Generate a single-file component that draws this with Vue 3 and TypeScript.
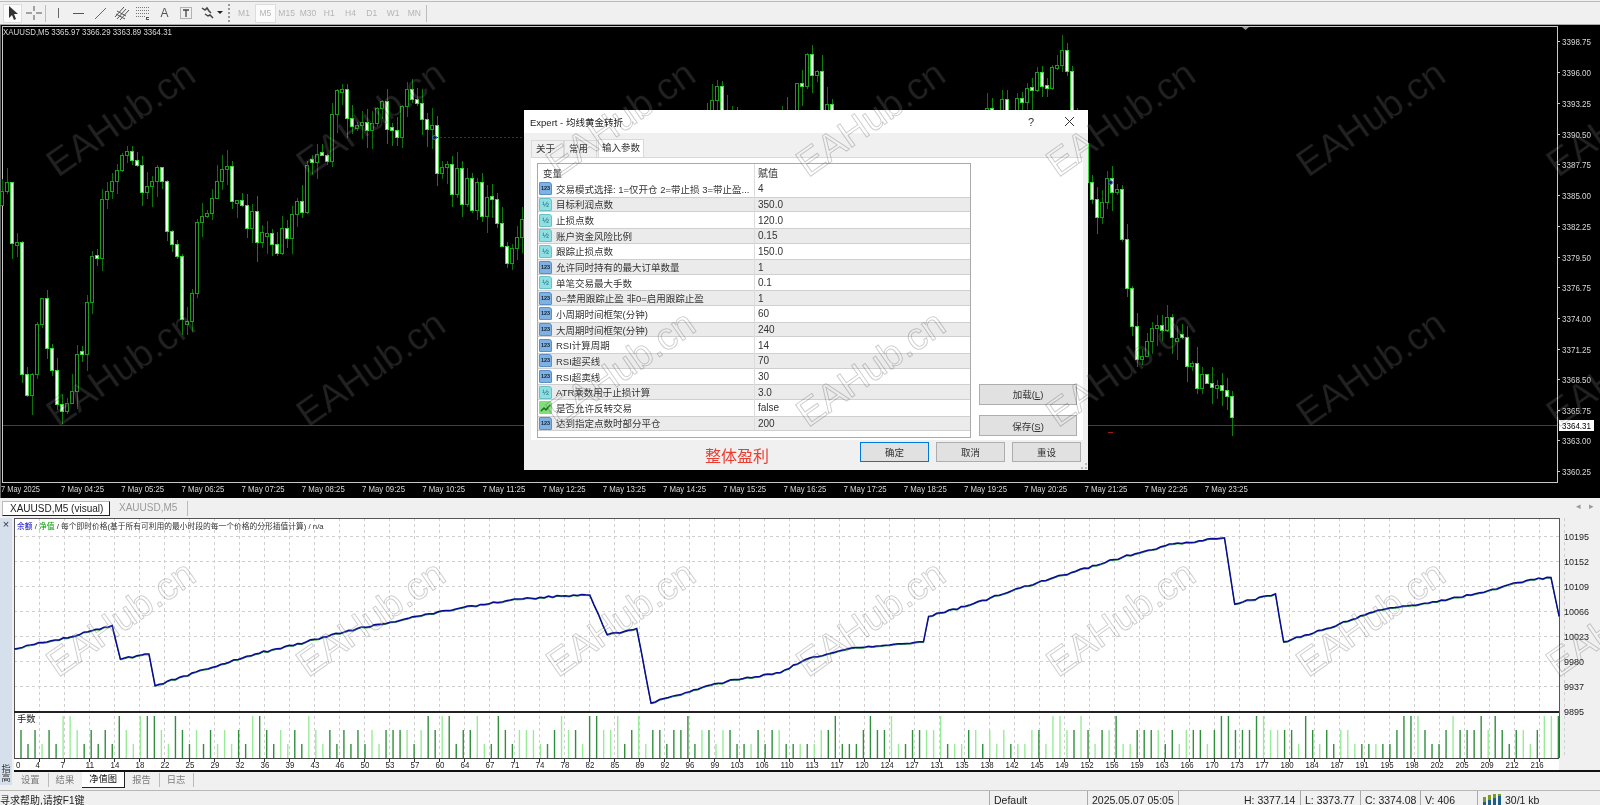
<script setup lang="ts">
function mulberry(a: number) {
  return () => {
    a |= 0; a = (a + 0x6d2b79f5) | 0;
    let t = Math.imul(a ^ (a >>> 15), 1 | a);
    t = (t + Math.imul(t ^ (t >>> 7), 61 | t)) ^ t;
    return ((t ^ (t >>> 14)) >>> 0) / 4294967296;
  };
}
const S = 1600 / 1568;
const keys: number[][] = [[0,200],[5,165],[10,215],[18,260],[23,420],[28,390],[35,330],[40,300],[48,340],[55,390],[62,410],[70,380],[78,350],[88,260],[95,240],[102,170],[108,180],[118,150],[125,170],[132,150],[140,180],[150,175],[160,200],[170,240],[178,300],[185,320],[190,250],[198,210],[208,180],[220,175],[232,190],[245,210],[258,225],[272,240],[285,210],[295,190],[305,160],[320,140],[332,100],[345,110],[358,125],[370,115],[385,125],[400,95],[412,100],[424,140],[432,165],[445,180],[460,185],[480,200],[495,240],[505,225],[520,240],[620,230],[690,110],[710,100],[740,170],[780,100],[795,55],[805,100],[825,180],[900,190],[1040,55],[1050,100],[1060,150],[1072,210],[1085,180],[1095,190],[1105,300],[1115,355],[1130,320],[1145,320],[1160,340],[1170,370],[1185,365],[1195,380],[1208,405]];
function interp(x: number): number {
  const sx = x / S;
  for (let i = 1; i < keys.length; i++) {
    if (sx <= keys[i][0]) {
      const [a, b] = keys[i - 1];
      const [c, d] = keys[i];
      return (b + ((d - b) * (sx - a)) / (c - a)) * S;
    }
  }
  return keys[keys.length - 1][1] * S;
}
const r1 = mulberry(77);
const extra: Record<number, number> = { 61: 470, 186: 360, 1131: 430, 1156: 394 };
const candles: { x: number; top: number; h: number; w1: number; w2: number; up: boolean }[] = [];
let prev = interp(0);
for (let i = 0; i < 247; i++) {
  const x = 1.5 + 5 * i;
  const c = interp(x) + (r1() - 0.5) * (x > 1100 ? 22 : 42);
  let o = prev;
  if (Math.abs(c - o) < 3) o = c + (r1() > 0.5 ? 3 : -3);
  const top = Math.min(o, c);
  const bot = Math.max(o, c);
  let w2 = bot + r1() * 20;
  if (extra[x] !== undefined) w2 = extra[x];
  candles.push({ x, top, h: bot - top, w1: top - r1() * 18, w2, up: c < o });
  prev = c;
}
const priceLabels: [string, number][] = [['3398.75',40],['3396.00',71],['3393.25',102],['3390.50',133],['3387.75',163],['3385.00',194],['3382.25',225],['3379.50',256],['3376.75',286],['3374.00',317],['3371.25',348],['3368.50',378],['3365.75',409],['3363.00',439],['3360.25',470]];
const timeLabels: string[] = Array.from({ length: 20 }, (_, i) => `7 May ${String(i + 4).padStart(2, '0')}:25`);

const eq: number[][] = [[14,635],[30,631],[50,627],[70,623],[90,617],[110,612],[118,645],[146,640],[152,671],[200,655],[250,640],[300,628],[350,615],[400,605],[450,595],[500,587],[550,583],[578,582],[595,621],[624,615],[638,688],[680,675],[720,665],[765,658],[790,645],[830,635],[905,628],[910,603],[950,592],[1000,575],[1050,560],[1100,545],[1150,532],[1200,526],[1210,591],[1250,581],[1258,628],[1300,615],[1350,597],[1400,590],[1450,580],[1500,567],[1520,565],[1528,603]];
const r2 = mulberry(5);
const eqPts: string[] = [];
for (let i = 0; i < eq.length; i++) {
  const [a, b] = eq[i];
  if (i > 0) {
    const [pa, pb] = eq[i - 1];
    const n = Math.floor((a - pa) / 4);
    for (let k = 1; k < n; k++) {
      const t = k / n;
      eqPts.push(`${(pa + (a - pa) * t) * S},${(pb + (b - pb) * t) * S - 517 + (r2() - 0.5) * 1.8}`);
    }
  }
  eqPts.push(`${a * S},${b * S - 517}`);
}
const eqLine = eqPts.join(' ');

const eqLabels: [string, number][] = [['10195',18],['10152',43],['10109',68],['10066',93],['10023',118],['9980',143],['9937',168],['9895',193]];
const gridX = Array.from({ length: 62 }, (_, i) => 39 + 25 * i);
const gridY = [18, 43, 68, 93, 118, 143, 168];
const xLabels = '0 4 7 11 14 18 22 25 29 32 36 39 43 46 50 53 57 60 64 67 71 74 78 82 85 89 92 96 99 103 106 110 113 117 120 124 127 131 135 138 142 145 149 152 156 159 163 166 170 173 177 180 184 187 191 195 198 202 205 209 212 216'.split(' ');

const volSeq = '2d 1d 2d 1l 2d 1d 3l 3l 2l 1d 2d 1d 2d 1d 3d 2l 1l 3l 3d 3d 2l 1l 3d 2d 1d 2l 1d 2d 1l 2l 1l 2d 1d 3l 3d 2d 1d 2l 1l 2d 1d 3l 2l 1l 2d 1d 2d 1d 2d 1d 2l 1l 2d'.split(' ');
const r3 = mulberry(21);
const vols = Array.from({ length: 220 }, (_, i) => {
  let code = volSeq[i];
  if (!code) {
    const lv = r3();
    code = (lv < 0.22 ? '3' : lv < 0.62 ? '2' : '1') + (r3() < 0.6 ? 'd' : 'l');
  }
  const h = code[0] === '3' ? 42 : code[0] === '2' ? 28 : 14;
  return { x: 21 + 7.02 * i, h, c: code[1] === 'd' ? '#2f8f3a' : '#98ec98' };
});

type Kind = 'n' | 'd' | 'b';
const rows: { name: string; value: string; kind: Kind }[] = [
  { name: '交易模式选择: 1=仅开仓 2=带止损 3=带止盈...', value: '4', kind: 'n' },
  { name: '目标利润点数', value: '350.0', kind: 'd' },
  { name: '止损点数', value: '120.0', kind: 'd' },
  { name: '账户资金风险比例', value: '0.15', kind: 'd' },
  { name: '跟踪止损点数', value: '150.0', kind: 'd' },
  { name: '允许同时持有的最大订单数量', value: '1', kind: 'n' },
  { name: '单笔交易最大手数', value: '0.1', kind: 'd' },
  { name: '0=禁用跟踪止盈 非0=启用跟踪止盈', value: '1', kind: 'n' },
  { name: '小周期时间框架(分钟)', value: '60', kind: 'n' },
  { name: '大周期时间框架(分钟)', value: '240', kind: 'n' },
  { name: 'RSI计算周期', value: '14', kind: 'n' },
  { name: 'RSI超买线', value: '70', kind: 'n' },
  { name: 'RSI超卖线', value: '30', kind: 'n' },
  { name: 'ATR乘数用于止损计算', value: '3.0', kind: 'd' },
  { name: '是否允许反转交易', value: 'false', kind: 'b' },
  { name: '达到指定点数时部分平仓', value: '200', kind: 'n' },
];
const timeframes = ['M1', 'M5', 'M15', 'M30', 'H1', 'H4', 'D1', 'W1', 'MN'];
const marks: number[][] = [];
for (let r = 0; r < 3; r++) for (let c = 0; c < 7; c++) marks.push([58 + 250 * c, 178 + 250 * r]);
</script>

<template>
  <div class="app">
    <header class="toolbar">
      <div class="tool sel">
        <svg width="14" height="16" viewBox="0 0 14 16"><path d="M3 1v12l3-3 2 5 2-1-2-5h4z" fill="#333"/></svg>
      </div>
      <div class="tool">
        <svg width="16" height="16" viewBox="0 0 16 16"><path d="M0 8h6M10 8h6M8 1v5M8 10v5" stroke="#555" fill="none"/></svg>
      </div>
      <i class="sep"></i>
      <div class="tool"><svg width="16" height="16" viewBox="0 0 16 16"><path d="M8.500 3v10" stroke="#666" fill="none"/></svg></div>
      <div class="tool"><svg width="16" height="16" viewBox="0 0 16 16"><path d="M2 8.500h11" stroke="#555" fill="none"/></svg></div>
      <div class="tool"><svg width="16" height="16" viewBox="0 0 16 16"><path d="M2 14 13 3" stroke="#666" fill="none"/></svg></div>
      <div class="tool"><svg width="16" height="16" viewBox="0 0 16 16"><path d="M1 12 10 2M3 14 12 4M6 15l9-10M3 6l9 5M2 9l9 5" stroke="#555" fill="none"/></svg></div>
      <div class="tool"><svg width="16" height="16" viewBox="0 0 16 16"><path d="M1 2.500h13M1 5.500h13M1 8.500h13M1 11.500h9" stroke="#777" stroke-dasharray="1 1" fill="none"/><path d="M11 12h3v1h-2v1h2v1h-3z" fill="#555"/></svg></div>
      <div class="tool letter">A</div>
      <div class="tool"><svg width="16" height="16" viewBox="0 0 16 16"><rect x="2.500" y="2.500" width="11" height="11" fill="none" stroke="#777" stroke-dasharray="1 1"/><path d="M5 5h6M8 5v7" stroke="#444" stroke-width="1.300" fill="none"/></svg></div>
      <div class="tool wide">
        <svg width="24" height="16" viewBox="0 0 24 16"><path d="M2 3l3 2 2-2 2 3 2 2M5 9l3 2 2-1 3 3" stroke="#444" stroke-width="1.500" fill="none"/><path d="M17 6h6l-3 3z" fill="#222"/></svg>
      </div>
      <i class="grip"></i>
      <div class="tf-group">
        <span v-for="t in timeframes" :key="t" class="tf" :class="{ active: t === 'M5' }">{{ t }}</span>
      </div>
      <i class="sep end"></i>
    </header>

    <section class="chart">
      <svg class="plot" width="1600" height="473" viewBox="0 24 1600 473">
        <g shape-rendering="crispEdges">
          <path d="M0.500 24V497" stroke="#666" fill="none"/>
          <rect x="2" y="25" width="1555.500" height="456" fill="none" stroke="#c8c8c8"/>
          <path d="M3 424.500H1557" stroke="#39444f" fill="none"/>
          <g v-for="c in candles" :key="c.x">
            <line :x1="c.x + 0.5" :x2="c.x + 0.5" :y1="c.w1" :y2="c.w2" :stroke="c.up ? '#0d6f0d' : '#0f7f0f'"/>
            <rect :x="c.x - 1" :y="c.top" width="3" :height="c.h" :fill="c.up ? '#000' : '#f2fff2'" :stroke="c.up ? '#1c9a1c' : '#3bdc3b'"/>
          </g>
          <path d="M436 136.500H524" stroke="#1c2f9e" stroke-dasharray="2 2" fill="none"/>
          <path d="M1108 431.500h5" stroke="#9e1c1c" fill="none"/>
        </g>
        <circle cx="434.500" cy="136.500" r="2" fill="#1a1a1a" stroke="#4a6ae8"/>
        <circle cx="1110.500" cy="181.500" r="2" fill="#1a1a1a" stroke="#4a6ae8"/>
        <path d="M1242 26h7l-3.500 3z" fill="#999"/>
        <text x="3" y="34" class="t light" textLength="169" lengthAdjust="spacingAndGlyphs">XAUUSD,M5  3365.97 3366.29 3363.89 3364.31</text>
        <g v-for="p in priceLabels" :key="p[0]">
          <path :d="`M1557 ${p[1] + 0.5}h3`" stroke="#ccc" fill="none"/>
          <text x="1562" :y="p[1] + 3.500" class="t light" textLength="29" lengthAdjust="spacingAndGlyphs">{{ p[0] }}</text>
        </g>
        <rect x="1559" y="419" width="35" height="11" fill="#fff"/>
        <text x="1562" y="428" class="t" fill="#000" textLength="29" lengthAdjust="spacingAndGlyphs">3364.31</text>
        <text x="1" y="491" class="t light" textLength="39" lengthAdjust="spacingAndGlyphs">7 May 2025</text>
        <g v-for="(t, i) in timeLabels" :key="t">
          <text :x="61 + i * 60.2" y="491" class="t light" textLength="43" lengthAdjust="spacingAndGlyphs">{{ t }}</text>
        </g>
      </svg>
    </section>

    <nav class="win-tabs">
      <span class="win-tab active">XAUUSD,M5 (visual)</span>
      <span class="win-tab">XAUUSD,M5</span>
      <span class="arrows">◂&nbsp;&nbsp;&nbsp;▸</span>
    </nav>

    <section class="tester">
      <aside class="side">
        <span class="close">×</span>
        <span class="side-label">指<br>高</span>
      </aside>
      <div class="tester-main">
        <svg class="plot" width="1588" height="254" viewBox="12 517 1588 254">
          <svg x="0" y="517" width="1600" height="254" viewBox="0 0 1600 254">
            <rect x="14" y="0.500" width="1545" height="253" fill="#fff"/>
            <g shape-rendering="crispEdges" fill="none">
              <path v-for="x in gridX" :key="x" :d="`M${x + 0.5} 0V240`" stroke="#cfcfcf" stroke-dasharray="3 3"/>
              <path v-for="y in gridY" :key="y" :d="`M14 ${y + 0.5}H1559`" stroke="#cfcfcf" stroke-dasharray="3 3"/>
              <path d="M14.500 0V240M14 .5H1559M1559.500 0V240" stroke="#555"/>
              <path d="M14 194H1559" stroke="#222" stroke-width="2"/>
              <path d="M14 240.500H1559" stroke="#444"/>
              <path d="M14 253H1600" stroke="#111" stroke-width="2" />
            </g>
            <path v-for="v in vols" :key="v.x" :d="`M${v.x} 240V${240 - v.h}`" :stroke="v.c" stroke-width="1.400" fill="none"/>
            <polyline :points="eqLine" fill="none" stroke="#2aa02a" stroke-width="1" transform="translate(0 .8)"/>
            <polyline :points="eqLine" fill="none" stroke="#0a0a96" stroke-width="1.500"/>
            <text x="17" y="11" class="t legend"><tspan fill="#0000c8">余额</tspan><tspan fill="#333"> / </tspan><tspan fill="#00a000">净值</tspan><tspan fill="#333"> / 每个即时价格(基于所有可利用的最小时段的每一个价格的分形插值计算) / n/a</tspan></text>
            <text x="17" y="204" class="t cjk" fill="#222">手数</text>
            <g v-for="p in eqLabels" :key="p[0]">
              <text x="1564" :y="p[1] + 3.500" class="t" fill="#222" :textLength="p[0].length * 5" lengthAdjust="spacingAndGlyphs">{{ p[0] }}</text>
            </g>
            <g v-for="(l, i) in xLabels" :key="i">
              <path v-if="i > 0" :d="`M${39.5 + 25 * (i - 1)} 240v4`" stroke="#333" fill="none"/>
              <text :x="i === 0 ? 16 : 10.5 + 25 * i - (l.length > 2 ? 5 : 0)" y="250" class="t" fill="#222" :textLength="l.length * 4.400" lengthAdjust="spacingAndGlyphs">{{ l }}</text>
            </g>
          </svg>
        </svg>
        <nav class="tabs-bottom">
          <span class="b-tab">设置</span>
          <span class="b-tab">结果</span>
          <span class="b-tab active">净值图</span>
          <span class="b-tab">报告</span>
          <span class="b-tab">日志</span>
        </nav>
      </div>
    </section>

    <footer class="status">
      <span class="cell help">寻求帮助,请按F1键</span>
      <span class="cell c1">Default</span>
      <span class="cell c2">2025.05.07 05:05</span>
      <span class="cell c4">H: 3377.14</span>
      <span class="cell c5">L: 3373.77</span>
      <span class="cell c6">C: 3374.08</span>
      <span class="cell c7">V: 406</span>
      <span class="cell c8">
        <svg width="20" height="13" viewBox="0 0 20 13"><path d="M1 4h3v9H1zM6 2h3v11H6zM11 1h3v12h-3zM16 1h3v12h-3z" fill="#7d9b1e"/><path d="M1 9h3v4H1zM6 7h3v6H6zM11 5h3v8h-3zM16 3h3v10h-3z" fill="#1d5f86"/></svg>
        30/1 kb
      </span>
    </footer>

    <div class="dialog">
      <div class="title">
        <span class="title-text">Expert - 均线黄金转折</span>
        <span class="q">?</span>
        <svg class="x" width="11" height="11" viewBox="0 0 11 11"><path d="M1 1l9 9M10 1l-9 9" stroke="#333" fill="none"/></svg>
      </div>
      <div class="d-tabs">
        <span class="d-tab">关于</span>
        <span class="d-tab">常用</span>
        <span class="d-tab active">输入参数</span>
      </div>
      <div class="page">
        <div class="table">
          <div class="row head"><span class="name h">变量</span><span class="val">赋值</span></div>
          <div v-for="(r, i) in rows" :key="i" class="row" :class="{ alt: i % 2 === 1 }">
            <span class="name">
              <span class="ic" :class="r.kind">
                <template v-if="r.kind === 'n'">123</template>
                <template v-else-if="r.kind === 'd'">½</template>
                <svg v-else width="13" height="13" viewBox="0 0 13 13"><path d="M2 10l3-3 2 2 4-5" stroke="#1c6b1c" stroke-width="1.500" fill="none"/></svg>
              </span>
              {{ r.name }}
            </span>
            <span class="val">{{ r.value }}</span>
          </div>
        </div>
        <div class="side-btns">
          <button class="btn side-btn" type="button">加载(<u>L</u>)</button>
          <button class="btn side-btn" type="button">保存(<u>S</u>)</button>
        </div>
      </div>
      <div class="foot">
        <span class="profit">整体盈利</span>
        <button class="btn main primary" type="button">确定</button>
        <button class="btn main" type="button">取消</button>
        <button class="btn main" type="button">重设</button>
      </div>
      <svg class="d-grip" width="6" height="6" viewBox="0 0 6 6"><path d="M4 0h2v2H4zM0 4h2v2H0zM4 4h2v2H4z" fill="#bbb"/></svg>
    </div>

    <svg class="marks" width="1600" height="805" viewBox="0 0 1600 805">
      <text v-for="m in marks" :key="m[0] + '-' + m[1]" :x="m[0]" :y="m[1]" :transform="`rotate(-35 ${m[0]} ${m[1]})`" class="mark">EAHub.cn</text>
    </svg>
  </div>
</template>

<style>
html, body { margin: 0; background: #f0f0f0; overflow: hidden; }
</style>

<style scoped>
.app {
  position: relative;
  width: 1600px;
  height: 805px;
  overflow: hidden;
  display: flex;
  flex-direction: column;
  background: #f0f0f0;
  font-family: "Liberation Sans", "Noto Sans CJK SC", sans-serif;
  font-size: 10px;
  color: #222;
  filter: blur(0.35px);
}
.toolbar {
  margin-top: 1px;
  border-top: 1px solid #bbb;
  border-bottom: 1px solid #a8a8a8;
  box-sizing: border-box;
  display: flex;
  align-items: center;
  padding-left: 3px;
  flex: none;
  height: 24px;
}
.tool { width: 21.300px; height: 19px; display: flex; align-items: center; justify-content: center; box-sizing: border-box; flex: none; }
.tool.sel { width: 19px; background: #fbfbfb; border: 1px solid #ddd; margin-right: 1px; }
.tool.letter { font-weight: 400; color: #555; font-size: 12px; }
.tool.wide { width: 32px; }
.sep { width: 1px; height: 17px; background: #bcbcbc; margin: 0 1px; flex: none; }
.sep.end { margin-left: 1px; }
.grip { width: 2px; height: 18px; margin: 0 1px 0 0; border-left: 2px dotted #999; flex: none; }
.tf-group { display: flex; }
.tf { width: 21.300px; height: 19px; display: flex; align-items: center; justify-content: center; color: #b4b4b4; font-size: 8.500px; box-sizing: border-box; }
.tf.active { background: #fbfbfb; border: 1px solid #ddd; }
.chart { height: 473px; background: #000; flex: none; }
.plot { display: block; }
.t { font-family: "Liberation Sans", "Noto Sans CJK SC", sans-serif; font-size: 9.500px; }
.t.cjk { font-size: 9.300px; }
.t.legend { font-size: 7.750px; }
.light { fill: #d8d8d8; white-space: pre; }
.win-tabs {
  height: 20px;
  flex: none;
  display: flex;
  align-items: flex-start;
  padding: 3px 0 0 2px;
  box-sizing: border-box;
  font-size: 10px;
  position: relative;
}
.win-tab { height: 15px; line-height: 14px; padding: 0 9px; color: #999; border-right: 1px solid #bbb; box-sizing: border-box; }
.win-tab.active { color: #222; background: #fff; border: 1px solid #bbb; border-right-color: #222; border-bottom-color: #222; width: 108px; padding: 0 0 0 7px; }
.win-tab:nth-child(2) { padding-right: 10px; margin-left: 0; }
.arrows { margin-left: auto; margin-right: 6px; color: #999; font-size: 9px; }
.tester { flex: none; height: 270px; display: flex; }
.side { width: 12px; flex: none; background: #d5e0ec; position: relative; display: flex; flex-direction: column; justify-content: space-between; align-items: center; margin-bottom: 3px; }
.close { font-size: 11px; line-height: 11px; color: #333; margin-top: 1px; }
.side-label { font-size: 9px; line-height: 9px; text-align: center; color: #333; padding-bottom: 2px; }
.tester-main { flex: 1; display: flex; flex-direction: column; min-width: 0; }
.tabs-bottom { display: flex; height: 16px; align-items: stretch; padding-left: 9px; font-size: 9.300px; }
.b-tab { padding: 0 8px 0 0; margin-right: 7px; border-right: 1px solid #bbb; color: #7c7c7c; line-height: 14px; height: 14px; margin-top: 1px; }
.b-tab.active { color: #111; background: #fff; padding: 0 7px; margin-left: -8px; border-right: 1px solid #222; border-bottom: 1px solid #222; height: 15px; margin-top: 0; line-height: 15px; }
.status {
  flex: none;
  height: 15px;
  border-top: 1px solid #b8b8b8;
  margin-top: 2px;
  display: grid;
  grid-template-columns: 989px 98px 91px 122px 60px 60px 57px 1fr;
  font-size: 10.500px;
  align-items: start;
}
.cell { height: 15px; padding: 2px 0 0 4px; border-left: 1px solid #aaa; box-sizing: border-box; white-space: nowrap; display: flex; align-items: center; gap: 3px; }
.help { border-left: 0; padding-left: 0; font-size: 10px; }
.c4 { padding-left: 65px; }
.c8 svg { flex: none; }
.dialog {
  position: absolute;
  left: 524px;
  top: 110px;
  width: 564px;
  height: 360px;
  background: #f0f0f0;
  display: flex;
  flex-direction: column;
}
.title { height: 23px; background: #fff; display: flex; align-items: center; padding-left: 6px; flex: none; font-size: 9.500px; }
.title-text { flex: 1; }
.q { margin-right: 30px; color: #333; font-size: 11px; }
.x { margin-right: 13px; }
.d-tabs { display: flex; margin: 6px 0 0 7px; height: 18px; flex: none; font-size: 9.500px; }
.d-tab { width: 33px; height: 17px; margin-top: 1px; box-sizing: border-box; border: 1px solid #d9d9d9; border-bottom: 0; text-align: center; padding-right: 4px; line-height: 16px; color: #333; }
.d-tab.active { width: 46px; height: 18px; margin-top: 0; background: #fff; margin-left: 1px; padding-right: 0; }
.page { height: 283px; margin: 0 5px 0 7px; background: #fff; display: flex; padding: 5px 6px 3px 6px; box-sizing: border-box; flex: none; border-top: 1px solid #d9d9d9; }
.table { width: 434px; height: 275px; border: 1px solid #aaa; box-sizing: border-box; flex: none; background: #fff; }
.row { height: 15.650px; display: flex; font-size: 9.500px; align-items: center; box-sizing: border-box; color: #333; }
.row.head { height: 17px; }
.row.alt { background: #ebebeb; box-shadow: inset 0 1px #cfcfcf, inset 0 -1px #cfcfcf; }
.name { width: 216px; display: flex; align-items: center; gap: 4px; padding-left: 1px; flex: none; box-sizing: border-box; white-space: nowrap; overflow: hidden; height: 100%; }
.name.h { padding-left: 5px; }
.val { border-left: 1px solid #dcdcdc; padding-left: 3px; height: 100%; display: flex; align-items: center; font-size: 10px; flex: 1; }
.ic { width: 13px; height: 13px; flex: none; border-radius: 1px 3px 1px 1px; font-size: 5.500px; line-height: 13px; text-align: center; font-weight: 700; box-sizing: border-box; display: block; }
.ic.n { background: #7fb2e2; border: 1px solid #5c8fc4; line-height: 11px; color: #123; }
.ic.d { background: #8fe0e4; border: 1px solid #6cc0c8; color: #1c6a72; font-size: 8px; line-height: 11px; font-weight: 400; }
.ic.b { background: #7fe07a; }
.ic svg { display: block; }
.side-btns { flex: 1; display: flex; flex-direction: column; justify-content: flex-end; padding: 0 0 1px 8px; gap: 10.500px; }
.btn { background: #e1e1e1; border: 1px solid #adadad; color: #333; font: inherit; font-size: 9.500px; padding: 0; box-sizing: border-box; }
.side-btn { width: 98px; height: 21px; }
.foot { height: 20px; display: flex; align-items: center; margin-top: 2px; padding-left: 181px; flex: none; position: relative; }
.profit { font-size: 16px; color: #ee3b2f; width: 155px; flex: none; line-height: 20px; margin-top: 5px; font-family: "Noto Sans CJK SC", sans-serif; }
.main { width: 69px; height: 20px; margin-right: 7px; }
.main.primary { border: 1.500px solid #0078d7; }
.d-grip { position: absolute; right: 1px; bottom: 1px; }
.marks { position: absolute; left: 0; top: 0; pointer-events: none; }
.mark {
  font-family: "Liberation Sans", sans-serif;
  font-size: 38px;
  fill: rgba(255, 255, 255, 0.13);
  stroke: rgba(0, 0, 0, 0.2);
  stroke-width: 1;
}
</style>
